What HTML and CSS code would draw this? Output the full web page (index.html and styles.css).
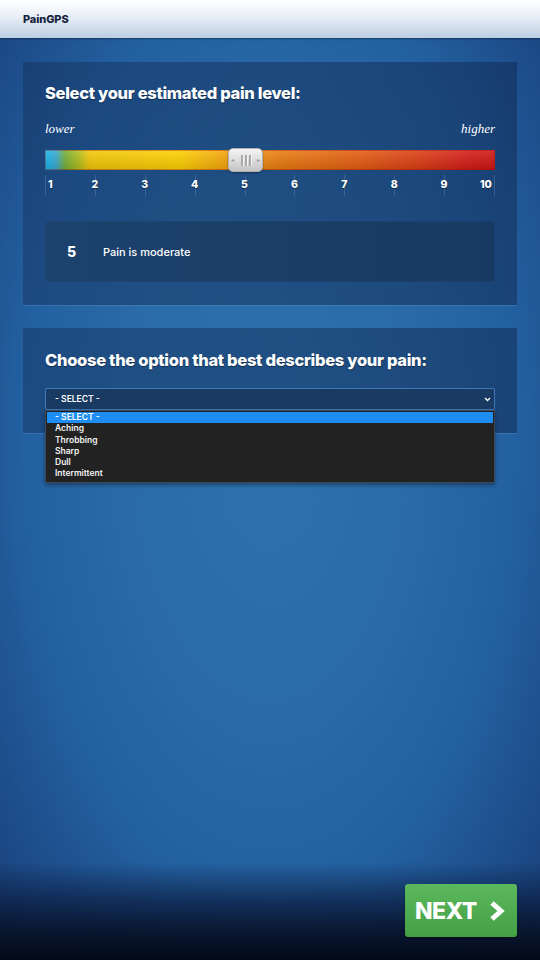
FILE: index.html
```html
<!DOCTYPE html>
<html lang="en">
<head>
<meta charset="utf-8">
<title>PainGPS</title>
<link rel="stylesheet" href="styles.css">
</head>
<body>
<div class="page">
  <header class="topbar"><span class="brand">PainGPS</span></header>
  <main class="content">
    <section class="card card-level">
      <h2 class="card-title">Select your estimated pain level:</h2>
      <div class="scale-labels"><span>lower</span><span>higher</span></div>
      <div class="bar">
        <div class="handle">
          <span class="arrow">&#9666;</span>
          <span class="grip"><i></i><i></i><i></i></span>
          <span class="arrow">&#9656;</span>
        </div>
      </div>
      <div class="ticks">
        <div class="tick first"><span>1</span></div>
        <div class="tick"><span>2</span></div>
        <div class="tick"><span>3</span></div>
        <div class="tick"><span>4</span></div>
        <div class="tick"><span>5</span></div>
        <div class="tick"><span>6</span></div>
        <div class="tick"><span>7</span></div>
        <div class="tick"><span>8</span></div>
        <div class="tick"><span>9</span></div>
        <div class="tick last"><span>10</span></div>
      </div>
      <div class="info">
        <span class="info-num">5</span>
        <span class="info-text">Pain is moderate</span>
      </div>
    </section>
    <section class="card card-option">
      <h2 class="card-title">Choose the option that best describes your pain:</h2>
      <div class="select-wrap">
        <div class="select">
          <span>- SELECT -</span>
          <svg class="chev" width="7" height="5" viewBox="0 0 7 5"><path d="M1 1 L3.5 3.5 L6 1" fill="none" stroke="#fff" stroke-width="1.3"/></svg>
        </div>
        <ul class="dropdown">
          <li class="active">- SELECT -</li>
          <li>Aching</li>
          <li>Throbbing</li>
          <li>Sharp</li>
          <li>Dull</li>
          <li>Intermittent</li>
        </ul>
      </div>
    </section>
  </main>
  <footer class="footer">
    <button class="next">NEXT <svg width="18" height="22" viewBox="0 0 18 22"><path d="M4 3 L13 11 L4 19" fill="none" stroke="#fff" stroke-width="5" stroke-linejoin="miter"/></svg></button>
  </footer>
</div>
</body>
</html>
```
FILE: styles.css
```css
html, body {
  margin: 0;
  padding: 0;
}
body {
  font-family: "Inter", "Open Sans", sans-serif;
  color: #fff;
  background: #0a1630;
}
.page {
  width: 540px;
  height: 960px;
  display: flex;
  flex-direction: column;
  background:
    linear-gradient(to bottom, rgba(5,12,28,0) 0, rgba(5,12,28,0) 862px, rgba(12,30,66,0.7) 900px, rgba(8,20,44,0.95) 930px, rgba(4,10,24,1) 960px),
    radial-gradient(ellipse 380px 720px at 270px 440px, #2d72b0 0%, #2a6aa8 40%, #2360a0 65%, #1d4d8a 85%, #183f78 100%);
  overflow: hidden;
}
.topbar {
  height: 38px;
  flex: 0 0 38px;
  display: flex;
  align-items: center;
  padding-left: 23px;
  background: linear-gradient(to bottom, #ffffff 0%, #e8eef6 45%, #bccee3 100%);
  box-shadow: 0 1px 2px rgba(0,0,0,0.35);
}
.brand {
  font-size: 11px;
  font-weight: 800;
  color: #15243f;
  letter-spacing: -0.1px;
}
.content {
  padding: 24px 23px 0;
  display: flex;
  flex-direction: column;
  gap: 23px;
  flex: 1;
}
.card {
  background: linear-gradient(to right, rgba(18,44,86,0.42), rgba(16,40,80,0.5));
  box-shadow: 0 1px 0 rgba(90,150,210,0.35);
  padding: 21px 22px 23px;
}
.card-title {
  margin: 0;
  font-size: 16.5px;
  line-height: 20px;
  font-weight: 800;
  letter-spacing: -0.3px;
  text-shadow: 0 1px 1px rgba(0,0,0,0.4);
}
.scale-labels {
  margin-top: 17px;
  display: flex;
  justify-content: space-between;
  font-family: "Liberation Serif", "DejaVu Serif", serif;
  font-style: italic;
  font-size: 13px;
  line-height: 18px;
}
.bar {
  margin-top: 12px;
  height: 20px;
  position: relative;
  background:
    linear-gradient(to bottom, rgba(255,255,255,0.12), rgba(0,0,0,0.12)),
    linear-gradient(to right, #12b6f0 0%, #3aaad0 2.5%, #74b036 4.5%, #a8bc20 7%, #f4c808 10%, #ffd000 30%, #f5a60c 40%, #ea7c10 52%, #e45c10 70%, #dc3a14 84%, #d41c16 94%, #d01414 100%);
  box-shadow: inset 0 0 0 1px rgba(150,20,10,0.35);
}
.handle {
  position: absolute;
  left: 183px;
  top: -2px;
  width: 35px;
  height: 24px;
  box-sizing: border-box;
  border-radius: 5px;
  background: linear-gradient(to bottom, #f4f4f4, #d8d8d8 60%, #c4c4c4);
  border: 1px solid #b0b0b0;
  box-shadow: 0 1px 2px rgba(0,0,0,0.35);
  display: flex;
  align-items: center;
  justify-content: space-between;
  padding: 0 2px;
}
.arrow {
  font-size: 6px;
  color: #9a9a9a;
  line-height: 1;
}
.grip {
  display: flex;
  gap: 2px;
}
.grip i {
  display: block;
  width: 2px;
  height: 11px;
  background: #a9a9a9;
  box-shadow: 1px 0 0 #f4f4f4;
}
.ticks {
  height: 26px;
  display: flex;
  justify-content: space-between;
  align-items: flex-end;
}
.tick {
  position: relative;
  width: 1px;
  height: 21px;
  background: rgba(160,190,225,0.22);
}
.tick span {
  position: absolute;
  top: 4px;
  left: 0;
  transform: translateX(-50%);
  font-size: 10.5px;
  line-height: 12px;
  font-weight: 800;
  text-shadow: 0 1px 1px rgba(0,0,0,0.5);
}
.tick.first span {
  left: 3px;
  transform: none;
}
.tick.last span {
  left: auto;
  right: 3px;
  transform: none;
}
.info {
  margin-top: 25px;
  height: 61px;
  border-radius: 3px;
  background: linear-gradient(to right, #1c426d, #183a62);
  box-shadow: inset 0 0 0 1px rgba(40,80,130,0.3);
  display: flex;
  align-items: center;
  padding-left: 22px;
}
.info-num {
  width: 36px;
  font-size: 14px;
  font-weight: 800;
}
.info-text {
  font-size: 11px;
  font-weight: 500;
}
.card-option {
  padding-top: 22px;
  padding-bottom: 23px;
}
.select-wrap {
  position: relative;
  margin-top: 18px;
}
.select {
  height: 22px;
  box-sizing: border-box;
  border: 1px solid #3f78b4;
  border-radius: 2px;
  background: #193a63;
  display: flex;
  align-items: center;
  justify-content: space-between;
  padding: 0 3px 0 9px;
  font-size: 8.5px;
  font-weight: 600;
}
.dropdown {
  position: absolute;
  left: 0;
  right: 0;
  top: 100%;
  margin: 0;
  padding: 1px 1px 2px;
  list-style: none;
  background: #222222;
  border: 1px solid #3c4a5c;
  box-shadow: 0 2px 4px rgba(0,0,0,0.4);
  z-index: 5;
}
.dropdown li {
  height: 11.3px;
  line-height: 11.3px;
  padding-left: 8px;
  font-size: 8.5px;
  font-weight: 600;
  color: #f2f2f2;
}
.dropdown li.active {
  background: #1e8ef4;
  color: #fff;
}
.footer {
  display: flex;
  justify-content: flex-end;
  padding: 0 23px 23px;
}
.next {
  width: 112px;
  height: 53px;
  border: 0;
  border-radius: 3px;
  background: linear-gradient(to bottom, #5cb85c, #44a044);
  box-shadow: 0 1px 2px rgba(0,0,0,0.4);
  color: #fff;
  font-family: "Inter", "Open Sans", sans-serif;
  font-size: 23px;
  font-weight: 800;
  letter-spacing: -0.5px;
  display: flex;
  align-items: center;
  justify-content: flex-start;
  gap: 11px;
  padding: 0 0 0 10px;
}
.next svg {
  display: block;
}
```
